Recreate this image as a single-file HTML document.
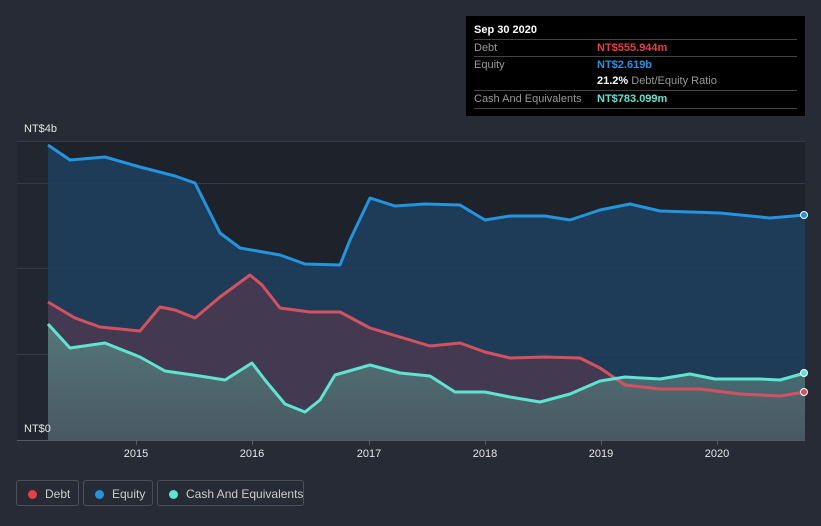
<!DOCTYPE html>
<html><head><meta charset="utf-8"><style>
body{margin:0;background:#262b36;font-family:"Liberation Sans",sans-serif;}
.wrap{position:relative;width:821px;height:526px;overflow:hidden;background:#262b36}
.tip{position:absolute;left:466px;top:16px;width:339px;height:100px;background:#000;color:#fff;font-size:11px}
.tip .r{position:absolute;left:8px;width:323px;border-top:1px solid #444;height:17px;line-height:17px;color:#999}
.tip .v{position:absolute;left:123px;font-weight:bold}
.leg{position:absolute;top:480px;height:26px;border:1px solid #4a4f5a;border-radius:3px;color:#ccc;font-size:12px;line-height:26px;box-sizing:border-box;white-space:nowrap}
.leg i{position:absolute;top:9px;width:9px;height:9px;border-radius:50%}
</style></head><body><div class="wrap">
<svg width="821" height="526" style="position:absolute;left:0;top:0">
<defs>
<linearGradient id="cg" x1="0" y1="0" x2="0" y2="1"><stop offset="0" stop-color="#5a8a88" stop-opacity=".75"/><stop offset="1" stop-color="#4a6068" stop-opacity=".8"/></linearGradient>
</defs>
<rect x="17" y="141" width="788" height="299" fill="#212630"/>
<rect x="48" y="141" width="757" height="299" fill="#1e222b"/>
<g stroke="#333945" stroke-width="1">
<line x1="17" y1="141.5" x2="805" y2="141.5"/><line x1="17" y1="183.5" x2="805" y2="183.5"/><line x1="17" y1="268.5" x2="805" y2="268.5"/><line x1="17" y1="354.5" x2="805" y2="354.5"/></g>
<polygon fill="#1f4060" fill-opacity=".85" points="48,145 70,160 105,157 140,167 175,176 195,183 220,233 240,248 280,255 305,264 340,265 350,240 370,198 395,206 425,204 460,205 485,220 510,216 545,216 570,220 600,210 630,204 660,211 720,213 770,218 805,215 805,440 48,440"/>
<polygon fill="#4a3a50" fill-opacity=".85" points="48,302 75,318 100,327 140,331 160,307 175,310 195,318 220,297 250,275 262,285 280,308 310,312 340,312 370,328 400,337 430,346 460,343 485,352 510,358 545,357 580,358 600,368 625,385 660,389 700,389 740,394 780,396 805,392 805,440 48,440"/>
<polygon fill="url(#cg)" points="48,324 70,348 105,343 140,357 165,371 200,376 225,380 252,363 265,380 285,404 305,412 320,400 335,375 370,365 400,373 430,376 455,392 485,392 510,397 540,402 570,394 600,381 625,377 660,379 690,374 715,379 760,379 780,380 805,373 805,440 48,440"/>
<g fill="none" stroke-width="3" stroke-linejoin="round">
<polyline stroke="#2394df" points="48,145 70,160 105,157 140,167 175,176 195,183 220,233 240,248 280,255 305,264 340,265 350,240 370,198 395,206 425,204 460,205 485,220 510,216 545,216 570,220 600,210 630,204 660,211 720,213 770,218 805,215"/>
<polyline stroke="#d4525f" points="48,302 75,318 100,327 140,331 160,307 175,310 195,318 220,297 250,275 262,285 280,308 310,312 340,312 370,328 400,337 430,346 460,343 485,352 510,358 545,357 580,358 600,368 625,385 660,389 700,389 740,394 780,396 805,392"/>
<polyline stroke="#5ee4cf" points="48,324 70,348 105,343 140,357 165,371 200,376 225,380 252,363 265,380 285,404 305,412 320,400 335,375 370,365 400,373 430,376 455,392 485,392 510,397 540,402 570,394 600,381 625,377 660,379 690,374 715,379 760,379 780,380 805,373"/>
</g>
<circle cx="804" cy="215" r="3.5" fill="#2394df" stroke="#fff" stroke-width="1"/>
<circle cx="804" cy="392" r="3.5" fill="#d4525f" stroke="#fff" stroke-width="1"/>
<circle cx="804" cy="373" r="3.5" fill="#5ee4cf" stroke="#fff" stroke-width="1"/>
<line x1="17" y1="440.5" x2="805" y2="440.5" stroke="#555a64"/>
<g stroke="#555a64"><line x1="136.5" y1="440" x2="136.5" y2="445"/><line x1="252.5" y1="440" x2="252.5" y2="445"/><line x1="369.5" y1="440" x2="369.5" y2="445"/><line x1="485.5" y1="440" x2="485.5" y2="445"/><line x1="601.5" y1="440" x2="601.5" y2="445"/><line x1="717.5" y1="440" x2="717.5" y2="445"/></g>
<g fill="#e6e6e6" font-size="11" font-family="Liberation Sans,sans-serif" text-anchor="middle">
<text x="136" y="457">2015</text><text x="252" y="457">2016</text><text x="369" y="457">2017</text><text x="485" y="457">2018</text><text x="601" y="457">2019</text><text x="717" y="457">2020</text></g>
<text x="24" y="132" fill="#e6e6e6" font-size="11" font-family="Liberation Sans,sans-serif">NT$4b</text>
<text x="24" y="432" fill="#e6e6e6" font-size="11" font-family="Liberation Sans,sans-serif">NT$0</text>
</svg>
<div class="tip">
<div style="position:absolute;left:8px;top:8px;font-weight:bold">Sep 30 2020</div>
<div class="r" style="top:23px">Debt<span class="v" style="color:#e63f46">NT$555.944m</span></div>
<div class="r" style="top:40px">Equity<span class="v" style="color:#2394df">NT$2.619b</span></div>
<div class="r" style="top:57px;border-top:none"><span class="v" style="color:#fff">21.2% <span style="color:#999;font-weight:normal">Debt/Equity Ratio</span></span></div>
<div class="r" style="top:74px;border-bottom:1px solid #444">Cash And Equivalents<span class="v" style="color:#5ee4cf">NT$783.099m</span></div>
</div>
<div class="leg" style="left:16px;width:63px"><i style="left:11px;background:#e63f46"></i><span style="position:absolute;left:28px">Debt</span></div>
<div class="leg" style="left:83px;width:70px"><i style="left:11px;background:#2394df"></i><span style="position:absolute;left:28px">Equity</span></div>
<div class="leg" style="left:157px;width:147px"><i style="left:11px;background:#5ee4cf"></i><span style="position:absolute;left:28px">Cash And Equivalents</span></div>
</div></body></html>
